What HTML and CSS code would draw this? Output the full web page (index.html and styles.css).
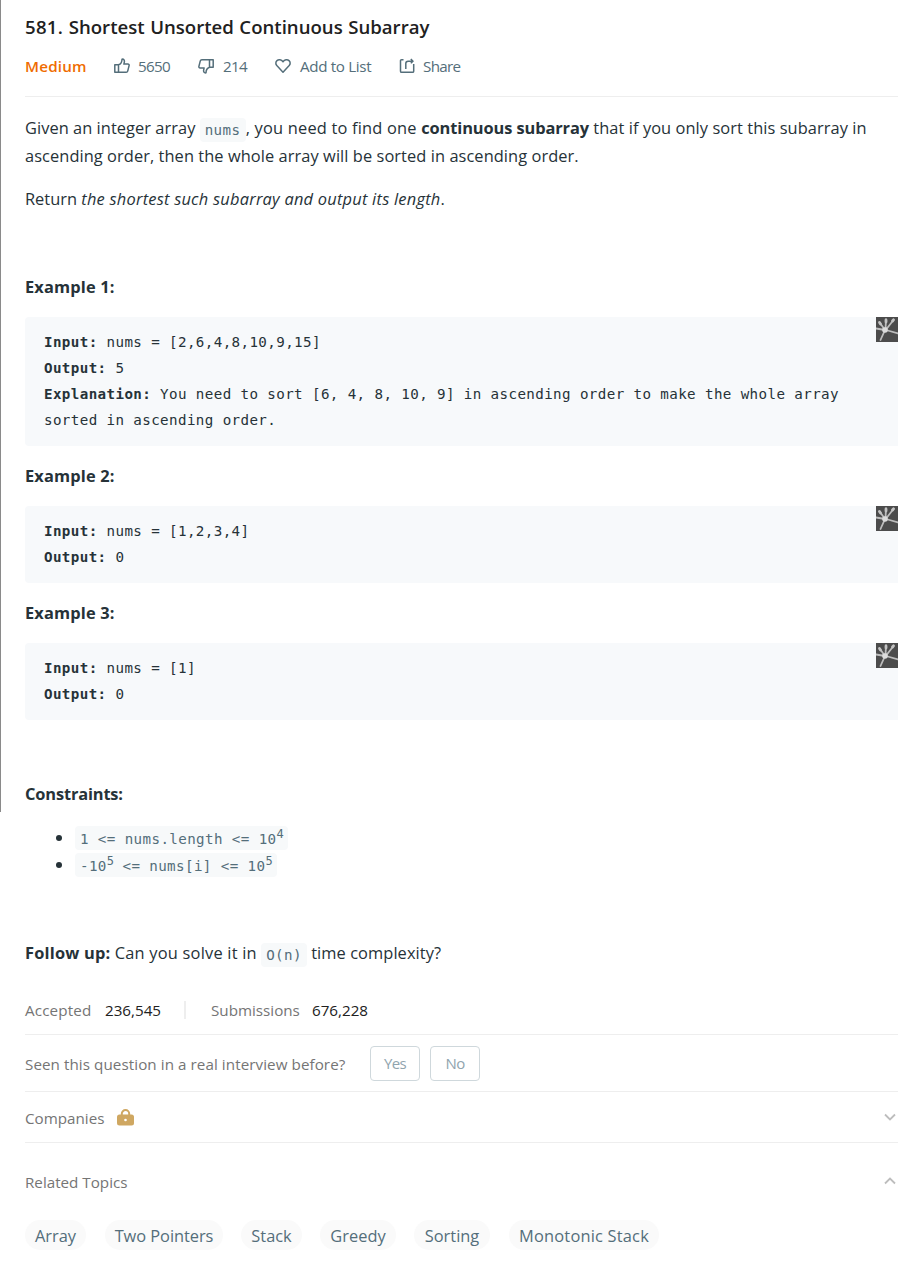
FILE: index.html
```html
<!DOCTYPE html>
<html lang="en">
<head>
<meta charset="utf-8">
<title>581. Shortest Unsorted Continuous Subarray</title>
<link rel="stylesheet" href="styles.css">
</head>
<body>
<div class="edge"></div>
<main class="panel">
  <h1 class="title"><span class="number">581.</span> Shortest Unsorted Continuous Subarray</h1>
  <div class="meta">
    <span class="level">Medium</span>
    <span class="action likes"><svg class="icon" viewBox="0 0 16 16"><path d="M.8 6.800h3.700v7.500H.8zM4.500 6.800C6.800 6 8 4.300 8 1.200c1.700-.4 2.600.8 2.400 2.400l-.5 2.500h4c.9 0 1.400.6 1.200 1.500l-1.400 5.500c-.2.800-.7 1.200-1.500 1.200H4.500"/></svg>5650</span>
    <span class="action dislikes"><svg class="icon" viewBox="0 0 16 16"><path d="M15.200 9.200h-3.700V1.700h3.700zM11.500 9.200C9.200 10 8 11.700 8 14.800c-1.700.4-2.600-.8-2.400-2.400l.5-2.500h-4c-.9 0-1.400-.6-1.200-1.500l1.400-5.500c.2-.8.7-1.200 1.500-1.200h7.700"/></svg>214</span>
    <span class="action list-add"><svg class="icon" viewBox="0 0 16 16"><path d="M8 14.2 1.8 7.6C.4 6 .6 3.8 2 2.6c1.6-1.400 4.400-1 6 1.200 1.600-2.200 4.400-2.600 6-1.200 1.400 1.200 1.600 3.400.2 5z"/></svg>Add to List</span>
    <span class="action share"><svg class="icon" viewBox="0 0 16 16"><path d="M4.500 1.700H2.600c-.7 0-1.100.4-1.100 1.100v10.400c0 .7.400 1.100 1.100 1.100h11c.7 0 1.100-.4 1.100-1.100V6M6.800 11V5.500c0-1.500.8-2.300 2.300-2.300h4.400M11.800 1l2.200 2.200-2.200 2"/></svg>Share</span>
  </div>

  <section class="statement">
    <p><span class="l1a">Given an integer array</span> <code class="nums">nums</code><span class="l1b">, you need to find one </span><strong class="cs">continuous subarray</strong><span class="l1c"> that if you only sort this subarray in</span><br><span class="l2">ascending order, then the whole array will be sorted in ascending order.</span></p>
    <p>Return <em>the shortest such subarray and output its length</em>.</p>
    <p class="example first"><strong>Example 1:</strong></p>
    <div class="block">
      <pre><b>Input:</b> nums = [2,6,4,8,10,9,15]
<b>Output:</b> 5
<b>Explanation:</b> You need to sort [6, 4, 8, 10, 9] in ascending order to make the whole array
sorted in ascending order.</pre>
      <svg class="badge" viewBox="0 0 22 25"><path class="bg" d="M0 0h22v25H0z"/><path class="ray" d="M9 13 4 6M9.500 12 10 2.500M10.500 12 17.500 3M9 13 0 11.500M10 13l12 3.500M9 13 4.500 23"/><path class="tip" d="m4.500 7-1-1.500M10 5V3M16.500 4l1-1.200"/><circle cx="9" cy="13" r="2.800"/></svg>
    </div>
    <p class="example"><strong>Example 2:</strong></p>
    <div class="block">
      <pre><b>Input:</b> nums = [1,2,3,4]
<b>Output:</b> 0</pre>
      <svg class="badge" viewBox="0 0 22 25"><path class="bg" d="M0 0h22v25H0z"/><path class="ray" d="M9 13 4 6M9.500 12 10 2.500M10.500 12 17.500 3M9 13 0 11.500M10 13l12 3.500M9 13 4.500 23"/><path class="tip" d="m4.500 7-1-1.500M10 5V3M16.500 4l1-1.200"/><circle cx="9" cy="13" r="2.800"/></svg>
    </div>
    <p class="example"><strong>Example 3:</strong></p>
    <div class="block">
      <pre><b>Input:</b> nums = [1]
<b>Output:</b> 0</pre>
      <svg class="badge" viewBox="0 0 22 25"><path class="bg" d="M0 0h22v25H0z"/><path class="ray" d="M9 13 4 6M9.500 12 10 2.500M10.500 12 17.500 3M9 13 0 11.500M10 13l12 3.500M9 13 4.500 23"/><path class="tip" d="m4.500 7-1-1.500M10 5V3M16.500 4l1-1.200"/><circle cx="9" cy="13" r="2.800"/></svg>
    </div>
    <p class="constraints"><strong>Constraints:</strong></p>
    <ul class="limits">
      <li><code>1 &lt;= nums.length &lt;= 10<sup>4</sup></code></li>
      <li><code>-10<sup>5</sup> &lt;= nums[i] &lt;= 10<sup>5</sup></code></li>
    </ul>
    <p class="follow"><strong>Follow up:</strong> <span class="fa">Can you solve it in</span> <code class="on">O(n)</code> <span class="fb">time complexity?</span></p>
  </section>

  <div class="stats">
    <span class="label acc">Accepted</span><span class="value v1">236,545</span>
    <i class="divider"></i>
    <span class="label sub">Submissions</span><span class="value v2">676,228</span>
  </div>
  <div class="row seen">
    <span class="label question">Seen this question in a real interview before?</span>
    <button class="btn">Yes</button>
    <button class="btn">No</button>
  </div>
  <div class="row companies">
    <span class="label comp">Companies</span>
    <svg class="lock" viewBox="0 0 17 17"><path class="shackle" d="M4.800 7V4.800a3.700 3.700 0 0 1 7.400 0V7"/><rect x="0" y="5.500" width="17" height="11" rx="2.500"/><circle cx="8.500" cy="11" r="1.300"/></svg>
    <svg class="chevron" viewBox="0 0 12 8"><path d="m1 1.500 5 5 5-5"/></svg>
  </div>
  <div class="row topics">
    <span class="label rel">Related Topics</span>
    <svg class="chevron" viewBox="0 0 12 8"><path d="m1 6.500 5-5 5 5"/></svg>
  </div>
  <div class="tags">
    <span class="tag t1">Array</span>
    <span class="tag t2">Two Pointers</span>
    <span class="tag t3">Stack</span>
    <span class="tag t4">Greedy</span>
    <span class="tag t5">Sorting</span>
    <span class="tag t6">Monotonic Stack</span>
  </div>
</main>
</body>
</html>
```
FILE: styles.css
```css
* { box-sizing: border-box; }
body {
  margin: 0;
  height: 1268px;
  overflow: hidden;
  background: #fff;
  color: #263238;
  font-family: "Open Sans", "Noto Sans", sans-serif;
  font-size: 16.4px;
  display: flex;
  align-items: flex-start;
}
.edge { width: 1px; height: 812px; background: #8a8a8a; }
.panel { flex: 1; padding-left: 24px; min-width: 0; white-space: nowrap; }
.title {
  margin: 0;
  padding-top: 13px;
  height: 52px;
  line-height: 28px;
  font-size: 18.6px;
  font-weight: 600;
  word-spacing: 0.7px;
  color: #212121;
}
.number { letter-spacing: 0.3px; }
.meta {
  display: flex;
  align-items: center;
  height: 45px;
  padding-bottom: 16px;
  border-bottom: 1px solid #eee;
  font-size: 15.2px;
  color: #546e7a;
}
.level { width: 89px; color: #ef6c00; font-weight: 600; letter-spacing: 0.2px; }
.action { display: flex; align-items: center; gap: 8px; letter-spacing: -0.35px; }
.likes { width: 84px; letter-spacing: -0.7px; }
.dislikes { width: 77px; gap: 9px; letter-spacing: -0.7px; }
.list-add { width: 124px; gap: 9px; }
.share { letter-spacing: -0.7px; }
.icon {
  width: 16px;
  height: 16px;
  fill: none;
  stroke: #546e7a;
  stroke-width: 1.5;
  stroke-linejoin: round;
}
.statement { padding-top: 17px; line-height: 28px; }
p { margin: 0 0 15px; height: 28px; }
p:first-child { height: 56px; }
strong { font-weight: 700; }
em { letter-spacing: 0.24px; }
code, pre { font-family: "DejaVu Sans Mono", "Liberation Mono", monospace; font-size: 14.2px; letter-spacing: 0.39px; }
code {
  display: inline-block;
  height: 24px;
  line-height: 25px;
  padding: 0 5px;
  border-radius: 4px;
  background: #f7f9fa;
  color: #546e7a;
  vertical-align: middle;
}
.l1a { letter-spacing: 0.05px; }
.nums { width: 46px; }
.l1b { letter-spacing: 0.2px; }
.cs { letter-spacing: -0.1px; }
.l1c { letter-spacing: 0.07px; }
.l2 { letter-spacing: 0.07px; }
.example { margin-bottom: 16px; letter-spacing: 0.15px; }
.first { margin-top: 60px; }
.block {
  display: flex;
  justify-content: space-between;
  margin-bottom: 16px;
  background: #f7f9fb;
  border-radius: 4px 0 0 4px;
}
pre { margin: 0; padding: 12px 0 13px 19px; line-height: 26px; }
.badge { width: 22px; height: 25px; flex: none; }
.badge .bg { fill: #4c4c4c; }
.badge .ray { stroke: #bdbdbd; stroke-width: 1.8; stroke-linecap: round; fill: none; }
.badge .tip { stroke: #c4c4c4; stroke-width: 2.8; stroke-linecap: round; fill: none; }
.badge circle { fill: #dcdcdc; }
.constraints { margin-top: 60px; margin-bottom: 16px; letter-spacing: -0.15px; }
.limits { margin: 0; padding-left: 50px; height: 115px; }
.limits li { height: 27px; }
.limits code { margin-top: -4px; line-height: 27px; }
sup { font-size: 12px; line-height: 0; vertical-align: 6px; letter-spacing: -0.5px; }
.follow { margin: 0; }
.follow strong { letter-spacing: 0.2px; }
.fa { letter-spacing: 0.22px; }
.on { margin: 0; }
.fb { letter-spacing: 0.08px; }
.stats { display: flex; align-items: center; height: 68px; padding-top: 19px; border-bottom: 1px solid #eee; font-size: 15.2px; }
.label { font-size: 15.2px; color: #757575; }
.value { color: #212121; }
.acc { width: 80px; letter-spacing: 0.15px; }
.v1 { width: 79px; }
.divider { width: 2px; height: 18px; margin-right: 25px; background: #eee; }
.sub { width: 101px; }
.row { display: flex; align-items: center; border-bottom: 1px solid #eee; }
.seen { height: 57px; }
.question { width: 345px; letter-spacing: 0.07px; padding-top: 1px; }
.btn {
  width: 50px;
  height: 35px;
  margin-right: 10px;
  padding: 0;
  background: #fff;
  border: 1px solid #cfd8dc;
  border-radius: 4px;
  color: #90a4ae;
  font: 15px "Open Sans", sans-serif;
  letter-spacing: -0.6px;
}
.companies { height: 51px; }
.comp { width: 92px; padding-top: 1px; }
.lock { width: 17px; height: 17px; fill: #cfa761; }
.lock .shackle { fill: none; stroke: #cfa761; stroke-width: 2; }
.lock circle { fill: #fff; }
.chevron { width: 12px; height: 8px; margin: 0 2px 0 auto; fill: none; stroke: #bdbdbd; stroke-width: 1.8; }
.topics { height: 77px; padding-top: 1px; border: 0; }
.topics .chevron { margin-bottom: 2px; }
.tags { display: flex; }
.tag {
  height: 30px;
  line-height: 31px;
  text-align: center;
  margin-right: 18px;
  border-radius: 15px;
  background: #fafafa;
  color: #546e7a;
}
.t1 { width: 61px; margin-right: 19px; }
.t2 { width: 118px; letter-spacing: -0.05px; }
.t3 { width: 61px; }
.t4 { width: 76px; }
.t5 { width: 76px; margin-right: 19px; }
.t6 { width: 150px; letter-spacing: 0.2px; }
```
